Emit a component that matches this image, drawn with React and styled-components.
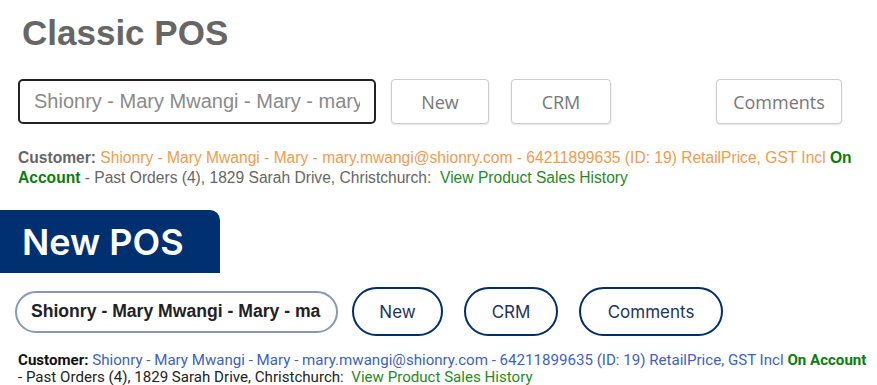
import React from "react";
import styled, { createGlobalStyle } from "styled-components";

const Global = createGlobalStyle`
  body {
    margin: 0;
    background: #fff;
    font-family: "Liberation Sans", Arial, sans-serif;
  }
`;

const Page = styled.div`
  width: 877px;
  height: 385px;
  overflow: hidden;
  display: flex;
  flex-direction: column;
`;

const ClassicSection = styled.section`
  display: flex;
  flex-direction: column;
  padding: 12px 0 0 18px;
`;

const ClassicTitle = styled.h1`
  margin: 0 0 0 4px;
  font-size: 35px;
  font-weight: 700;
  color: #666;
  line-height: 42px;
`;

const Toolbar = styled.div`
  display: flex;
  align-items: center;
  gap: ${(p) => p.$gap || 14}px;
  margin-top: ${(p) => p.$top || 0}px;
`;

const ClassicInput = styled.div`
  box-sizing: border-box;
  width: 358px;
  height: 45px;
  border: 2px solid #222;
  border-radius: 5px;
  padding: 0 14px;
  display: flex;
  align-items: center;
  font-size: 20px;
  color: #8a8a8a;
`;

const InputText = styled.span`
  flex: 1;
  white-space: nowrap;
  overflow: hidden;
`;

const ClassicButton = styled.button`
  box-sizing: border-box;
  height: 45px;
  width: ${(p) => p.$w}px;
  margin-left: ${(p) => p.$ml || 0}px;
  background: #fff;
  border: 1px solid #ccc;
  border-radius: 4px;
  box-shadow: 0 1px 2px rgba(0, 0, 0, 0.12);
  font-family: "Open Sans", sans-serif;
  font-size: 18px;
  color: #777;
`;

const ClassicInfo = styled.p`
  margin: 24px 0 0 0;
  font-family: "Liberation Sans Narrow", "Liberation Sans", sans-serif;
  font-size: 15.6px;
  line-height: 20px;
  color: #666;
  width: 850px;
`;

const Label = styled.b`
  color: ${(p) => p.$c};
  font-weight: 700;
`;

const Tone = styled.span`
  color: ${(p) => p.$c};
  font-weight: ${(p) => (p.$bold ? 700 : 400)};
`;

const NewSection = styled.section`
  display: flex;
  flex-direction: column;
  margin-top: 22px;
`;

const NewBanner = styled.div`
  width: 220px;
  height: 63px;
  box-sizing: border-box;
  background: #00306f;
  border-radius: 0 10px 0 0;
  padding-left: 22px;
  display: flex;
  align-items: center;
  font-family: Inter, sans-serif;
  font-size: 36px;
  font-weight: 600;
  color: #fff;
`;

const NewBody = styled.div`
  display: flex;
  flex-direction: column;
  padding-left: 15px;
`;

const PillInput = styled.div`
  box-sizing: border-box;
  width: 323px;
  height: 42px;
  margin-right: -7px;
  border: 2px solid #8797b6;
  border-radius: 21px;
  padding: 0 15px 0 14px;
  display: flex;
  align-items: center;
  font-family: "Liberation Sans", Arial, sans-serif;
  font-size: 17.6px;
  font-weight: 700;
  color: #222;
`;

const PillButton = styled.button`
  box-sizing: border-box;
  height: 49px;
  width: ${(p) => p.$w}px;
  background: #fff;
  border: 2px solid #002d6b;
  border-radius: 25px;
  font-family: Inter, sans-serif;
  font-size: 17px;
  color: #1d3260;
`;

const NewInfo = styled.p`
  margin: 16px 0 0 3px;
  font-family: Roboto, sans-serif;
  font-size: 15.1px;
  line-height: 17px;
  color: #222;
  width: 853px;
`;

export default function App() {
  return (
    <Page>
      <Global />
      <ClassicSection>
        <ClassicTitle>Classic POS</ClassicTitle>
        <Toolbar $top={25} $gap={15}>
          <ClassicInput>
            <InputText>Shionry - Mary Mwangi - Mary - mary.mwangi@shionry.com</InputText>
          </ClassicInput>
          <ClassicButton $w={98}>New</ClassicButton>
          <ClassicButton $w={100} $ml={7}>CRM</ClassicButton>
          <ClassicButton $w={126} $ml={90}>Comments</ClassicButton>
        </Toolbar>
        <ClassicInfo>
          <Label $c="#666">Customer:</Label>{" "}
          <Tone $c="#f39a4e">
            Shionry - Mary Mwangi - Mary - mary.mwangi@shionry.com - 64211899635 (ID: 19)
            RetailPrice, GST Incl
          </Tone>{" "}
          <Tone $c="#0a7d0a" $bold>On Account</Tone> - Past Orders (4), 1829 Sarah Drive,
          Christchurch:&nbsp; <Tone $c="#1f8a1f">View Product Sales History</Tone>
        </ClassicInfo>
      </ClassicSection>
      <NewSection>
        <NewBanner>New POS</NewBanner>
        <NewBody>
          <Toolbar $top={14} $gap={21}>
            <PillInput>
              <InputText>Shionry - Mary Mwangi - Mary - mary.mwangi@shionry.com</InputText>
            </PillInput>
            <PillButton $w={91}>New</PillButton>
            <PillButton $w={94}>CRM</PillButton>
            <PillButton $w={144}>Comments</PillButton>
          </Toolbar>
          <NewInfo>
            <Label $c="#111">Customer:</Label>{" "}
            <Tone $c="#3d5fc4">
              Shionry - Mary Mwangi - Mary - mary.mwangi@shionry.com - 64211899635 (ID: 19)
              RetailPrice, GST Incl
            </Tone>{" "}
            <Tone $c="#0a7d0a" $bold>On&nbsp;Account</Tone> - Past Orders (4), 1829 Sarah Drive,
            Christchurch:&nbsp; <Tone $c="#1f8a1f">View Product Sales History</Tone>
          </NewInfo>
        </NewBody>
      </NewSection>
    </Page>
  );
}
